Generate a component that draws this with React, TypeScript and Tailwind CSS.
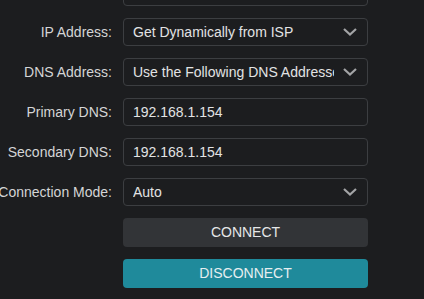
import React from 'react';

const Chevron = () => (
  <svg width="14" height="8" viewBox="0 0 14 8" fill="none" className="shrink-0">
    <path d="M1 1l6 5.5L13 1" stroke="#a3a4a6" strokeWidth="2.2" />
  </svg>
);

interface RowProps {
  label?: string;
  children: React.ReactNode;
}

const Row: React.FC<RowProps> = ({ label, children }) => (
  <div className="flex items-center">
    <div className="w-[112px] flex justify-end whitespace-nowrap text-[#d4d5d6] text-[14px]">
      {label}
    </div>
    <div className="ml-[11px] w-[245px]">{children}</div>
  </div>
);

const Select: React.FC<{ value: string }> = ({ value }) => (
  <div className="h-[28px] flex items-center border border-[#3c3e41] rounded-[4px] pl-[9px] pr-[10px] text-[#e2e3e4] text-[14px]">
    <span className="flex-1 overflow-hidden whitespace-nowrap mr-[9px]">{value}</span>
    <Chevron />
  </div>
);

const Input: React.FC<{ value: string }> = ({ value }) => (
  <div className="h-[28px] flex items-center border border-[#3c3e41] rounded-[4px] pl-[9px] text-[#e2e3e4] text-[14px]">
    {value}
  </div>
);

export default function App() {
  return (
    <div
      className="w-[424px] h-[299px] overflow-hidden bg-[#1c1d1f]"
      style={{ fontFamily: '"Liberation Sans", Arial, sans-serif' }}
    >
      <div className="mt-[-22px] flex flex-col gap-[12px]">
        <Row>
          <div className="h-[28px] border border-[#3c3e41] rounded-[4px]" />
        </Row>
        <Row label="IP Address:">
          <Select value="Get Dynamically from ISP" />
        </Row>
        <Row label="DNS Address:">
          <Select value="Use the Following DNS Addresses" />
        </Row>
        <Row label="Primary DNS:">
          <Input value="192.168.1.154" />
        </Row>
        <Row label="Secondary DNS:">
          <Input value="192.168.1.154" />
        </Row>
        <Row label="Connection Mode:">
          <Select value="Auto" />
        </Row>
        <Row>
          <button className="w-full h-[29px] rounded-[4px] bg-[#323437] text-[#e6e7e8] text-[14px]">
            CONNECT
          </button>
        </Row>
        <Row>
          <button className="w-full h-[29px] rounded-[4px] bg-[#1f8a9b] text-[#e6eef0] text-[14px]">
            DISCONNECT
          </button>
        </Row>
      </div>
    </div>
  );
}
